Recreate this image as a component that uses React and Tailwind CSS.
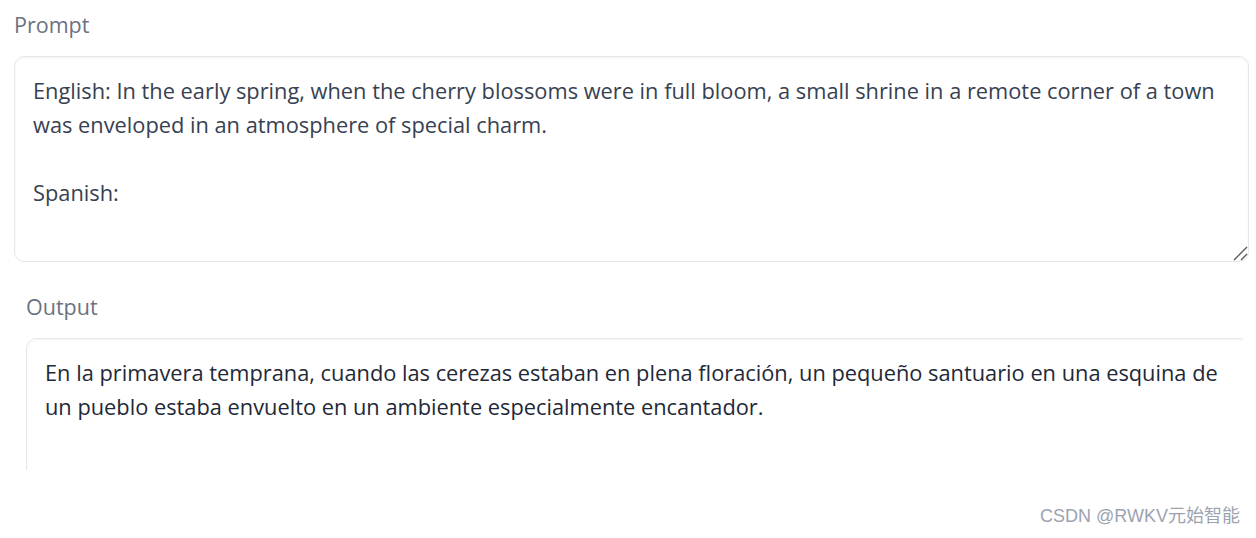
import React from 'react';

const promptText =
  'English: In the early spring, when the cherry blossoms were in full bloom, a small shrine in a remote corner of a town\nwas enveloped in an atmosphere of special charm.\n\nSpanish:';

function App() {
  return (
    <div className="relative h-[538px] w-full overflow-hidden bg-white font-['Open_Sans',sans-serif]">
      <div className="pl-[14px] pr-[7px] pt-[10px]">
        <div className="text-[21.5px] leading-[30px] text-[#6b7280]">Prompt</div>
        <div className="relative mt-[16px]">
          <textarea
            readOnly
            wrap="off"
            value={promptText}
            className="block h-[206px] w-full resize-none overflow-hidden rounded-[10px] border border-[#e5e7eb] px-[18px] pt-[17px] text-[21.8px] leading-[34px] text-[#374151] shadow-[inset_0_1px_3px_rgba(0,0,0,0.05)] outline-none font-['Open_Sans',sans-serif]"
          />
          {/* resize grip */}
          <svg className="absolute bottom-[1px] right-[1px]" width="16" height="16" viewBox="0 0 16 16">
            <path d="M2 15 L15 2" stroke="#555" strokeWidth="1.3" />
            <path d="M9 15 L15 9" stroke="#555" strokeWidth="1.3" />
          </svg>
        </div>
      </div>

      <div className="pl-[26px] pr-[13px] pt-[30px]">
        <div className="text-[21.5px] leading-[30px] text-[#6b7280]">Output</div>
        <div className="mt-[16px] h-[132px] overflow-hidden">
          <div className="h-[200px] w-[calc(100%+20px)] rounded-[10px] border border-[#e5e7eb] px-[18px] pt-[17px] text-[21.8px] leading-[34px] text-[#1f2937] shadow-[inset_0_1px_3px_rgba(0,0,0,0.05)]">
            <div className="whitespace-nowrap">
              En la primavera temprana, cuando las cerezas estaban en plena floración, un pequeño santuario en una esquina de
            </div>
            <div className="whitespace-nowrap">
              un pueblo estaba envuelto en un ambiente especialmente encantador.
            </div>
          </div>
        </div>
      </div>

      <div className="absolute bottom-[8px] right-[16px] text-[18px] text-[#9ca3af] font-['Liberation_Sans','Noto_Sans_CJK_SC',sans-serif]">
        CSDN @RWKV元始智能
      </div>
    </div>
  );
}

export default App;
